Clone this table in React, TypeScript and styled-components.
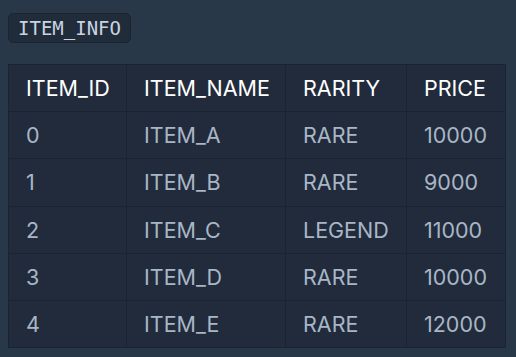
import styled, { createGlobalStyle } from 'styled-components'

const GlobalStyle = createGlobalStyle`
  html, body {
    margin: 0;
    background: #293848;
  }
  body {
    font-family: Inter, "Noto Sans", sans-serif;
  }
`

const Page = styled.div`
  padding: 13px 8px 8px 8px;
  display: flex;
  flex-direction: column;
  align-items: flex-start;
  gap: 21px;
`

const Badge = styled.code`
  display: inline-block;
  font-family: "DejaVu Sans Mono", "Liberation Mono", monospace;
  font-size: 19px;
  line-height: 28px;
  color: #c9d4e0;
  background: #212c3b;
  border: 1px solid #1b2431;
  border-radius: 5px;
  padding: 0 9px;
`

const Table = styled.table`
  border-collapse: collapse;
  table-layout: fixed;
  width: 497px;
  background: #212b3b;
  border: 1px solid #1a2332;
  font-size: 21.5px;
`

const Col = styled.col<{ w: number }>`
  width: ${p => p.w}px;
`

const HeadCell = styled.th`
  height: 46.2px;
  padding: 0 17px;
  text-align: left;
  font-weight: 400;
  color: #ffffff;
  white-space: nowrap;
  border: 1px solid #1a2332;
`

const Cell = styled.td`
  height: 46.2px;
  padding: 0 17px;
  color: #a8b6c6;
  white-space: nowrap;
  border: 1px solid #1a2332;
`

const columns = [
  { key: 'id', label: 'ITEM_ID', w: 118 },
  { key: 'name', label: 'ITEM_NAME', w: 159 },
  { key: 'rarity', label: 'RARITY', w: 121 },
  { key: 'price', label: 'PRICE', w: 99 },
] as const

const rows = [
  { id: 0, name: 'ITEM_A', rarity: 'RARE', price: 10000 },
  { id: 1, name: 'ITEM_B', rarity: 'RARE', price: 9000 },
  { id: 2, name: 'ITEM_C', rarity: 'LEGEND', price: 11000 },
  { id: 3, name: 'ITEM_D', rarity: 'RARE', price: 10000 },
  { id: 4, name: 'ITEM_E', rarity: 'RARE', price: 12000 },
]

export default function App() {
  return (
    <>
      <GlobalStyle />
      <Page>
        <Badge>ITEM_INFO</Badge>
        <Table>
          <colgroup>
            {columns.map(c => <Col key={c.key} w={c.w} />)}
          </colgroup>
          <thead>
            <tr>
              {columns.map(c => (
                <HeadCell key={c.key}>{c.label}</HeadCell>
              ))}
            </tr>
          </thead>
          <tbody>
            {rows.map(r => (
              <tr key={r.id}>
                <Cell>{r.id}</Cell>
                <Cell>{r.name}</Cell>
                <Cell>{r.rarity}</Cell>
                <Cell>{r.price}</Cell>
              </tr>
            ))}
          </tbody>
        </Table>
      </Page>
    </>
  )
}
